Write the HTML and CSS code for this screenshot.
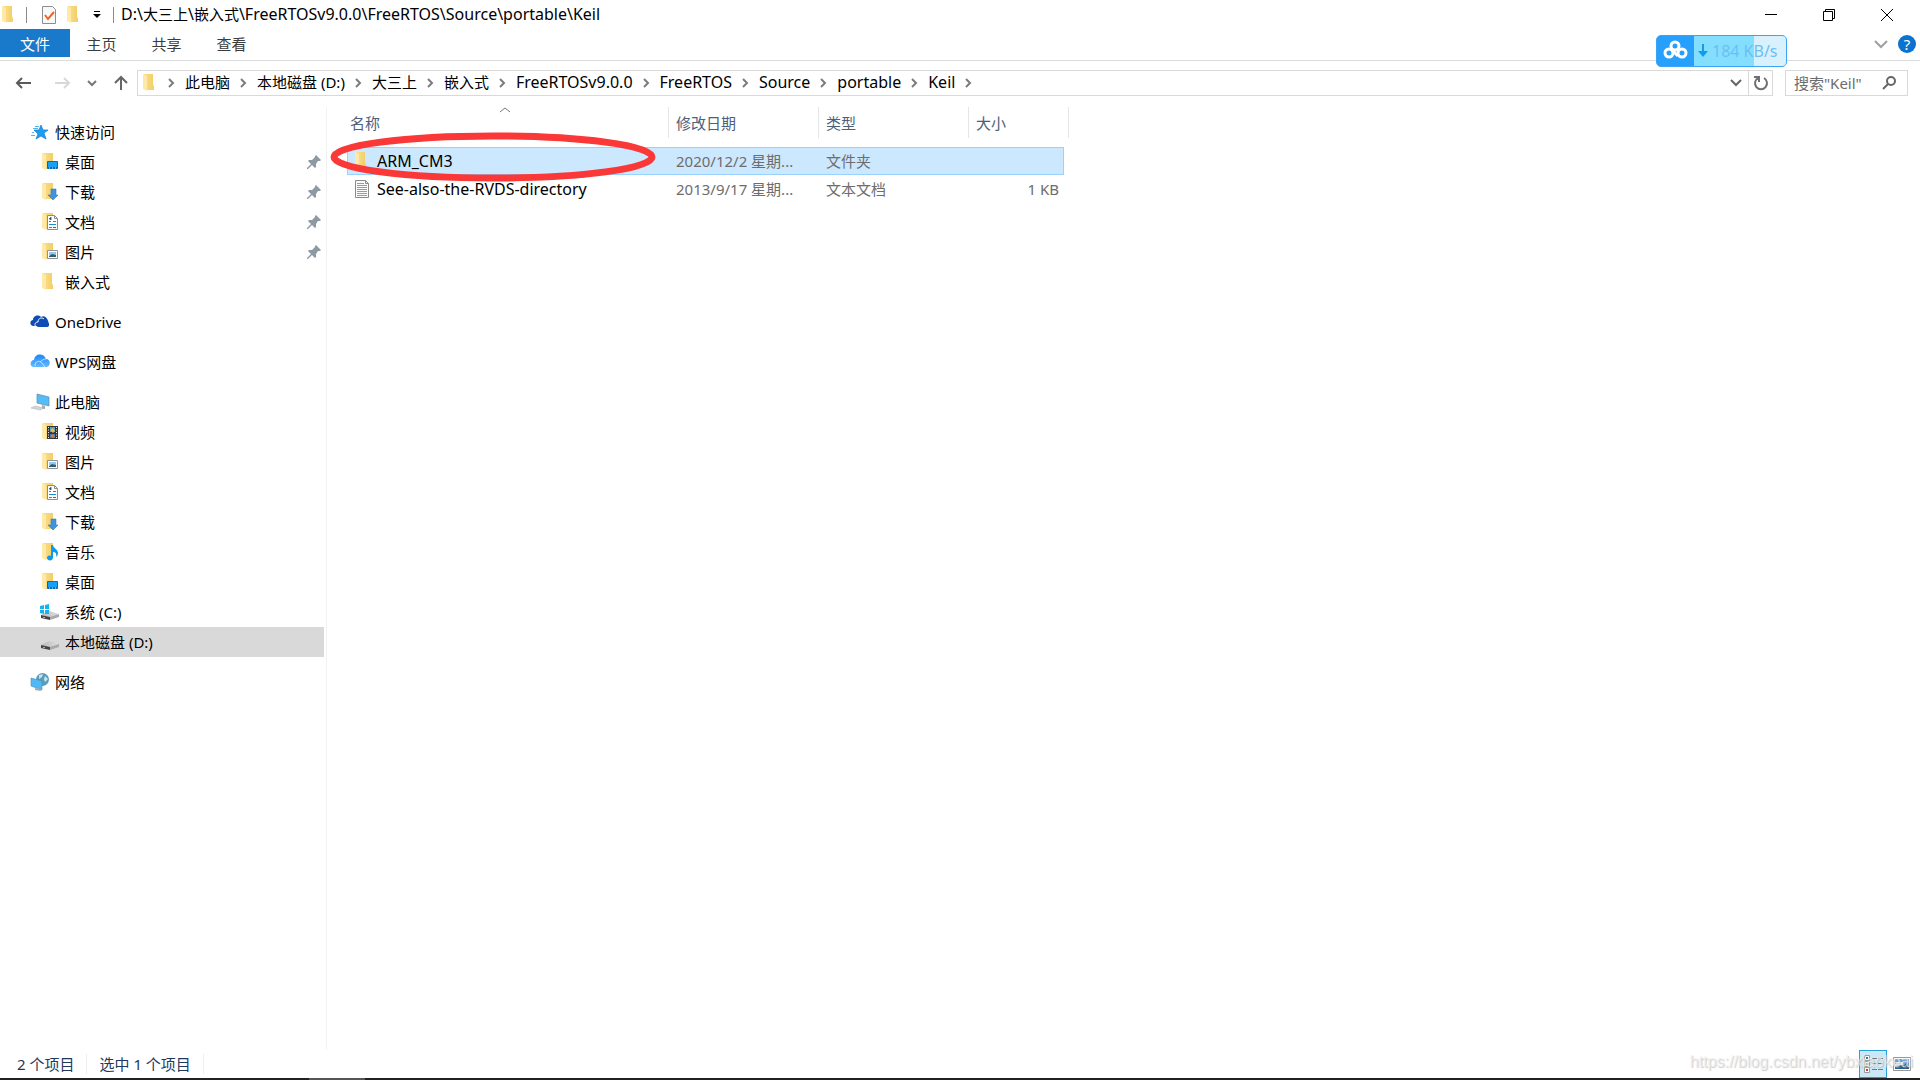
FILE: index.html
```html
<!DOCTYPE html>
<html lang="zh-CN">
<head>
<meta charset="utf-8">
<title>Keil</title>
<link rel="stylesheet" href="styles.css">
</head>
<body>
<svg class="defs" aria-hidden="true">
  <defs>
    <linearGradient id="gold" x1="0" x2="1"><stop offset="0" stop-color="#fbe08d"/><stop offset="1" stop-color="#f3cd66"/></linearGradient>
    <linearGradient id="wps" x1="0" y1="0" x2="0" y2="1"><stop offset="0" stop-color="#1f86f8"/><stop offset="1" stop-color="#62bbff"/></linearGradient>
    <linearGradient id="disk" x1="0" x2="1"><stop offset="0" stop-color="#b9b9b9"/><stop offset="1" stop-color="#dedede"/></linearGradient>
    <symbol id="folder" viewBox="0 0 20 20"><path fill="url(#gold)" d="M3 1h9v10l1 3v3H6z"/><path fill="#ffe9a8" d="M2 1l4 2v15l-4-2z"/></symbol>
    <symbol id="base" viewBox="0 0 20 20"><path fill="url(#gold)" d="M3 1h10v16H6z"/><path fill="#ffe9a8" d="M2 1l4 2v15l-4-2z"/></symbol>
    <symbol id="desktop" viewBox="0 0 20 20"><use href="#base"/><path fill="#16a0f6" stroke="#0b69b5" d="M7.500 9.500h10v7h-10z"/><path stroke="#0b69b5" stroke-width="2" d="M8 16h9"/><path stroke="#bfe6ff" stroke-dasharray="1 2" d="M9 16h7"/></symbol>
    <symbol id="down" viewBox="0 0 20 20"><use href="#base"/><path fill="#3e94de" stroke="#2f7dc6" stroke-width=".6" d="M11 7h5v6h2l-5 5-5-5h3z"/></symbol>
    <symbol id="doc" viewBox="0 0 20 20"><use href="#base"/><path fill="#fff" stroke="#8c8c8c" d="M7.500 3.500h7l3 3v11h-10z"/><path stroke="#8c8c8c" fill="none" d="M14.500 3.500v3h3"/><path stroke="#1b8fd6" d="M9 9.500h2m2 0h3m-7 3h7M9 7l2-2v3m-2 7.500h3"/><path stroke="#277a5c" d="M13 15.500h3"/></symbol>
    <symbol id="pic" viewBox="0 0 20 20"><use href="#base"/><path fill="#fff" stroke="#929292" d="M7.500 8.500h10v8h-10z"/><path fill="#8ec9f4" d="M9 10h7v3H9z"/><path fill="#315f72" d="M9 14l3-2 4 1v2H9z"/></symbol>
    <symbol id="video" viewBox="0 0 20 20"><use href="#base"/><path fill="#343434" d="M7 4h11v13H7z"/><path stroke="#eee" stroke-dasharray="1 1.500" d="M8.500 5v11m8-11v11"/><path fill="#3da1ec" d="M10 5h5v5h-5z"/><path fill="#e9bb3d" d="M10 8l3-2 2 3-2 2z"/><path fill="#2c79d2" d="M10 12h5v4h-5z"/><path fill="#db7b34" d="M10 14l3-2 2 2-2 2z"/></symbol>
    <symbol id="music" viewBox="0 0 20 20"><use href="#base"/><path fill="#0d9bec" d="M11 3h2c0 3 5 4 5 8 0 2-1 3-2 4 1-4-1-5-3-5v5c0 5-6 4-6 1 0-2 2-3 4-2z"/></symbol>
    <symbol id="star" viewBox="0 0 20 20"><path fill="#1b9df0" stroke="#167dcb" stroke-width=".7" d="M11 3l2 5h5l-4 3 2 6-5-3-5 3 2-5-4-4h5z"/><path stroke="#58b4ee" d="M5 4.500h4M3 6.500h5M2 10.500h2M1 13.500h4"/></symbol>
    <symbol id="onedrive" viewBox="0 0 20 20"><path fill="#0f4db4" d="M3 14c-4-1-3-6 0-6 0-4 5-6 8-3 5-3 8 4 8 9H7z"/><path fill="none" stroke="#fff" d="M6 15c-2-2-1-5 2-5 0-4 4-5 6-3"/><path fill="#0f4db4" d="M8 15c-3-1-1-5 1-4 0-4 6-4 7-1 4 0 4 5 1 5z"/></symbol>
    <symbol id="wpscloud" viewBox="0 0 20 20"><path fill="url(#wps)" d="M4 15C-1 15 0 8 4 8c1-7 10-7 12-1 5 0 5 8 0 8z"/><path fill="none" stroke="#d8eeff" stroke-width=".8" d="M5 14c0-5 4-6 7-3l3 4M10 10c2-2 4-3 6-3"/></symbol>
    <symbol id="pc" viewBox="0 0 20 20"><path fill="#53bdf7" stroke="#68899d" stroke-width=".7" d="M7 2l12 3v9L7 11z"/><path fill="#a1a9ad" d="M12 13l3 1v3h-3z"/><path fill="#d3d6d8" stroke="#a8adb0" stroke-width=".5" d="M1 16l4-2 9 2-4 2z"/></symbol>
    <symbol id="drive" viewBox="0 0 20 20"><path fill="url(#disk)" d="M1 13l8-4 10 3-7 4z"/><path fill="#444" d="M1 13l9 2v3l-9-2z"/><path fill="#a9a9a9" d="M10 15l9-3v3l-9 3z"/><path stroke="#58df79" d="M3 15.500h2"/></symbol>
    <symbol id="windrive" viewBox="0 0 20 20"><use href="#drive"/><path fill="#12b5ed" d="M0 4l4-1v4H0zm5-1l4-1v5H5zM0 8h4v4l-4-1zm5 0h4v4H5z"/></symbol>
    <symbol id="network" viewBox="0 0 20 20"><circle cx="12.500" cy="7.500" r="6.500" fill="#5a9db8"/><path fill="#c8e6ed" d="M9 3l4-1-1 3-3 2zm6 1l3 3-3 3-1-3z"/><path fill="#50b8f5" stroke="#4c8eb7" stroke-width=".6" d="M1 6l11 3v9L1 14z"/><path stroke="#a3abb0" stroke-width="2" d="M5 17l6 1"/></symbol>
    <symbol id="pin" viewBox="0 0 14 14"><path fill="#8d9aa3" d="M9 0l5 5-1 1h-2L9 9v3l-1 1-3-3-4 4H0v-1l4-4-3-3 1-1h3l3-3V1z"/></symbol>
    <symbol id="chev" viewBox="0 0 8 12"><path fill="none" stroke="#7c7c7c" stroke-width="2" d="M2 2l4 4-4 4"/></symbol>
  </defs>
</svg>
<div class="window">
  <header class="titlebar">
    <svg class="ico"><use href="#folder"/></svg>
    <span class="bar bar-a"></span>
    <button class="plain check" aria-label="属性"><svg width="16" height="20"><path fill="#f8f8f8" stroke="#8d8d8d" d="M1.500 1.500h10l3 3v14h-13z"/><path fill="none" stroke="#f06423" stroke-width="2" d="M4 10l3 4 6-7"/></svg></button>
    <button class="plain newfolder" aria-label="新建文件夹"><svg class="ico"><use href="#folder"/></svg></button>
    <button class="plain more" aria-label="自定义快速访问工具栏"><svg width="8" height="8"><path d="M1 0h6v1H1zM0 3h8L4 7z"/></svg></button>
    <span class="bar bar-b"></span>
    <h1>D:\<span class="han">大三上</span>\<span class="han">嵌入式</span>\FreeRTOSv9.0.0\FreeRTOS\Source\portable\Keil</h1>
    <div class="controls">
      <button class="plain" aria-label="最小化"><svg width="14" height="14"><path stroke="#000" d="M1 6.500h12"/></svg></button>
      <button class="plain" aria-label="还原"><svg width="14" height="14"><path fill="none" stroke="#000" d="M1.500 3.500h9v9h-9zM3.500 3V1.500h9v9H11"/></svg></button>
      <button class="plain" aria-label="关闭"><svg width="14" height="14"><path stroke="#000" d="M1 1l12 12M13 1L1 13"/></svg></button>
    </div>
  </header>
  <nav class="ribbon">
    <button class="tab file">文件</button><button class="tab">主页</button><button class="tab">共享</button><button class="tab">查看</button>
    <div class="help">
      <button class="plain" aria-label="展开功能区"><svg width="14" height="10"><path fill="none" stroke="#a0a0a0" stroke-width="2" d="M1 2l6 6 6-6"/></svg></button>
      <button class="plain round" aria-label="帮助">?</button>
    </div>
    <div class="speed">
      <svg width="37" height="30"><g fill="none" stroke="#fff" stroke-width="3"><circle cx="18" cy="10" r="4"/><circle cx="12" cy="17" r="4"/><circle cx="25" cy="17" r="4"/><path d="M15 14l6 6"/></g></svg>
      <span class="rate"><svg width="10" height="14"><path fill="#129bea" d="M4 0h2v7h4l-5 6-5-6h4z"/></svg>184 KB/s</span>
    </div>
  </nav>
  <div class="navrow">
    <div class="arrows">
      <button class="plain" aria-label="后退"><svg width="18" height="14"><path fill="none" stroke="#5a5a5a" stroke-width="2" d="M16 7H2m5-5L2 7l5 5"/></svg></button>
      <button class="plain" aria-label="前进"><svg width="18" height="14"><path fill="none" stroke="#d8d8d8" stroke-width="2" d="M1 7h14m-5-5l5 5-5 5"/></svg></button>
      <button class="plain" aria-label="最近浏览的位置"><svg width="10" height="8"><path fill="none" stroke="#777" stroke-width="2" d="M1 2l4 4 4-4"/></svg></button>
      <button class="plain" aria-label="上移"><svg width="14" height="16"><path fill="none" stroke="#666" stroke-width="2" d="M7 15V2M1 8l6-6 6 6"/></svg></button>
    </div>
    <div class="address">
      <svg class="ico"><use href="#folder"/></svg>
      <svg class="chev first"><use href="#chev"/></svg><a href="#" class="han">此电脑</a>
      <svg class="chev"><use href="#chev"/></svg><a href="#" class="han">本地磁盘 (D:)</a>
      <svg class="chev"><use href="#chev"/></svg><a href="#" class="han">大三上</a>
      <svg class="chev"><use href="#chev"/></svg><a href="#" class="han">嵌入式</a>
      <svg class="chev"><use href="#chev"/></svg><a href="#">FreeRTOSv9.0.0</a>
      <svg class="chev"><use href="#chev"/></svg><a href="#">FreeRTOS</a>
      <svg class="chev"><use href="#chev"/></svg><a href="#">Source</a>
      <svg class="chev"><use href="#chev"/></svg><a href="#">portable</a>
      <svg class="chev"><use href="#chev"/></svg><a href="#">Keil</a>
      <svg class="chev"><use href="#chev"/></svg>
      <button class="plain drop" aria-label="以前的位置"><svg width="12" height="8"><path fill="none" stroke="#666" stroke-width="2" d="M1 1l5 5 5-5"/></svg></button>
      <button class="plain refresh" aria-label="刷新"><svg width="16" height="16"><path fill="none" stroke="#707070" stroke-width="2" d="M11 3a6 6 0 1 1-6 0M1 2h5v5"/></svg></button>
    </div>
    <label class="search"><input type="text" placeholder="搜索&quot;Keil&quot;" aria-label="搜索"><svg width="14" height="14"><circle cx="9" cy="5" r="4" fill="none" stroke="#666" stroke-width="2"/><path stroke="#666" stroke-width="2" d="M6 8l-5 5"/></svg></label>
  </div>
  <main class="body">
    <aside class="tree">
      <ul>
        <li><a href="#"><svg class="ico"><use href="#star"/></svg>快速访问</a></li>
        <li class="sub"><a href="#"><svg class="ico"><use href="#desktop"/></svg>桌面<svg class="pin"><use href="#pin"/></svg></a></li>
        <li class="sub"><a href="#"><svg class="ico"><use href="#down"/></svg>下载<svg class="pin"><use href="#pin"/></svg></a></li>
        <li class="sub"><a href="#"><svg class="ico"><use href="#doc"/></svg>文档<svg class="pin"><use href="#pin"/></svg></a></li>
        <li class="sub"><a href="#"><svg class="ico"><use href="#pic"/></svg>图片<svg class="pin"><use href="#pin"/></svg></a></li>
        <li class="sub"><a href="#"><svg class="ico"><use href="#folder"/></svg>嵌入式</a></li>
      </ul>
      <ul><li><a href="#"><svg class="ico"><use href="#onedrive"/></svg>OneDrive</a></li></ul>
      <ul><li><a href="#"><svg class="ico"><use href="#wpscloud"/></svg>WPS网盘</a></li></ul>
      <ul>
        <li><a href="#"><svg class="ico"><use href="#pc"/></svg>此电脑</a></li>
        <li class="sub"><a href="#"><svg class="ico"><use href="#video"/></svg>视频</a></li>
        <li class="sub"><a href="#"><svg class="ico"><use href="#pic"/></svg>图片</a></li>
        <li class="sub"><a href="#"><svg class="ico"><use href="#doc"/></svg>文档</a></li>
        <li class="sub"><a href="#"><svg class="ico"><use href="#down"/></svg>下载</a></li>
        <li class="sub"><a href="#"><svg class="ico"><use href="#music"/></svg>音乐</a></li>
        <li class="sub"><a href="#"><svg class="ico"><use href="#desktop"/></svg>桌面</a></li>
        <li class="sub"><a href="#"><svg class="ico"><use href="#windrive"/></svg>系统 (C:)</a></li>
        <li class="sub current"><a href="#"><svg class="ico"><use href="#drive"/></svg>本地磁盘 (D:)</a></li>
      </ul>
      <ul><li><a href="#"><svg class="ico"><use href="#network"/></svg>网络</a></li></ul>
    </aside>
    <section class="files">
      <table>
        <colgroup><col class="c-name"><col class="c-date"><col class="c-type"><col class="c-size"></colgroup>
        <thead><tr><th>名称<svg class="sort" width="12" height="6"><path fill="none" stroke="#777" d="M1 5l5-4 5 4"/></svg></th><th>修改日期</th><th>类型</th><th>大小</th></tr></thead>
        <tbody>
          <tr class="selected"><td><div class="name"><svg class="ico"><use href="#folder"/></svg>ARM_CM3</div></td><td>2020/12/2 星期...</td><td>文件夹</td><td></td></tr>
          <tr><td><div class="name"><svg class="ico" viewBox="0 0 20 20"><path fill="#fafafa" stroke="#8b8b8b" d="M2.500 1.500h10l3 3v14h-13z"/><path fill="none" stroke="#8b8b8b" d="M12.500 1.500v3h3"/><path stroke="#9b9b9b" d="M4 4.500h7M4 6.500h10M4 8.500h10M4 10.500h10M4 12.500h10M4 14.500h10M4 16.500h10"/></svg>See-also-the-RVDS-directory</div></td><td>2013/9/17 星期...</td><td>文本文档</td><td>1 KB</td></tr>
        </tbody>
      </table>
      <svg class="mark" width="326" height="52"><ellipse cx="163" cy="26" rx="159" ry="21" fill="none" stroke="#fb3838" stroke-width="7"/></svg>
    </section>
  </main>
  <footer class="status">
    <span>2 个项目</span><span>选中 1 个项目</span>
    <div class="views">
      <button class="plain on" aria-label="详细信息"><svg width="20" height="18"><path fill="#fff" stroke="#999" d="M1.500.500h5v5h-5zm0 6h5v5h-5zm0 6h5v5h-5z"/><path stroke="#2a7a9f" stroke-width="2" d="M3 3h2"/><path stroke="#7b9b3c" stroke-width="2" d="M3 9h2"/><path stroke="#c33a2b" stroke-width="2" d="M3 15h2"/><path stroke="#777" stroke-dasharray="5 1" d="M9 3.500h11M9 8.500h11M9 14.500h11"/></svg></button>
      <button class="plain" aria-label="大图标"><svg width="18" height="14"><path fill="#fff" stroke="#999" d="M.500.500h17v13H.500z"/><path fill="#5a9fe6" d="M2 2h14v5H2z"/><path fill="#e8f3fb" d="M3 5h7v3H3z"/><path fill="#2b5c86" d="M2 9l7-1 7-2v6H2z"/></svg></button>
    </div>
    <span class="watermark">https://blog.csdn.net/ybxiaokeai</span>
  </footer>
  <div class="taskbar"></div>
</div>
</body>
</html>
```
FILE: styles.css
```css
* { box-sizing: border-box; }
body { margin: 0; background: #fff; color: #000; font: 15px/20px "Noto Sans", "Noto Sans CJK SC", sans-serif; }
.defs { position: absolute; width: 0; height: 0; }
svg { display: block; flex: none; }
a { color: inherit; text-decoration: none; }
button, input { font: inherit; color: inherit; }
.plain { display: flex; align-items: center; justify-content: center; padding: 0; border: 0; background: none; }
.ico { width: 20px; height: 20px; }
.window { display: flex; flex-direction: column; min-height: 100vh; }

.titlebar { display: flex; align-items: center; height: 29px; }
.bar { width: 1px; height: 16px; background: #8a8a8a; }
.bar-a { margin-left: 6px; }
.check { margin-left: 14px; }
.newfolder { margin-left: 8px; }
.more { margin-left: 8px; }
.bar-b { margin-left: 12px; }
h1 { margin: 0 0 0 7px; padding-bottom: 2px; font-size: 16px; line-height: 20px; font-weight: 400; white-space: nowrap; }
.controls { display: flex; margin-left: auto; padding-right: 4px; }
.controls button { width: 58px; height: 29px; }

.ribbon { position: relative; display: flex; height: 32px; border-bottom: 1px solid #dadbdc; color: #3c3c3c; }
.tab { width: 65px; height: 28px; padding: 2px 2px 0 0; border: 0; background: none; }
.tab.file { width: 70px; padding-right: 0; background: #1979ca; color: #fff; }
.help { display: flex; align-items: center; gap: 10px; height: 30px; margin-left: auto; padding-right: 4px; }
.round { width: 18px; height: 18px; border-radius: 50%; background: #0b72d0; color: #fff; font-size: 15px; line-height: 18px; }
.speed { position: absolute; top: 6px; right: 133px; display: flex; width: 131px; height: 32px; border: 1px solid #3aa5f5; border-radius: 5px; overflow: hidden; background: #26a0fc; }
.rate { display: flex; flex: 1; align-items: center; gap: 4px; padding-left: 4px; background: linear-gradient(90deg, #84dfff 0 60px, #d8f1fd 60px); color: #6abef7; font-size: 16px; white-space: nowrap; }

.navrow { display: flex; padding: 9px 12px 0 0; }
.arrows { display: flex; align-items: center; width: 137px; padding-left: 15px; }
.arrows button:nth-child(2) { margin-left: 21px; }
.arrows button:nth-child(3) { margin-left: 15px; }
.arrows button:nth-child(4) { margin-left: 17px; }
.address { display: flex; flex: 1; align-items: center; height: 26px; padding-left: 3px; border: 1px solid #d9d9d9; font-size: 16px; white-space: nowrap; }
.address a { padding-bottom: 2px; }
.han, .address .han { font-size: 15px; }
.chev { width: 8px; height: 12px; margin: 0 10px 0 9px; }
.chev.first { margin-left: 6px; }
.drop { width: 24px; margin-left: auto; }
.refresh { width: 24px; height: 24px; border-left: 1px solid #d9d9d9; }
.search { display: flex; align-items: center; width: 123px; height: 26px; margin-left: 12px; padding: 0 11px 0 8px; border: 1px solid #d9d9d9; }
.search input { flex: 1; min-width: 0; padding: 0; border: 0; outline: 0; background: none; }
.search input::placeholder { color: #6d6d6d; opacity: 1; }

.body { display: flex; flex: 1; padding-top: 11px; }
.tree { width: 327px; padding: 10px 2px 0 0; border-right: 1px solid #f2f2f2; }
.tree ul { margin: 0 0 10px; padding: 0; list-style: none; }
.tree a { display: flex; align-items: center; gap: 5px; height: 30px; padding: 0 3px 0 30px; }
.tree .sub a { padding-left: 40px; }
.tree .current { background: #d9d9d9; }
.tree .pin { width: 14px; height: 14px; margin-left: auto; }

.files { position: relative; flex: 1; padding-left: 20px; }
table { width: 717px; table-layout: fixed; border-collapse: collapse; }
.c-name { width: 322px; }
.c-date, .c-type { width: 150px; }
.c-size { width: 95px; }
th { position: relative; height: 31px; padding: 0 0 0 7px; color: #4c607a; font-weight: 400; text-align: left; }
th::after { content: ""; position: absolute; top: 0; right: 0; width: 1px; height: 31px; background: #e5e5e5; }
th:last-child::after { right: -5px; }
.sort { position: absolute; top: 0; left: 152px; }
th:first-child { padding-left: 3px; }
td { height: 27px; padding: 0 0 0 7px; color: #6d6d6d; white-space: nowrap; }
td:last-child { padding-right: 5px; text-align: right; }
td:first-child { padding-left: 6px; color: #000; }
.name { display: flex; align-items: center; gap: 4px; font-size: 16px; }
tbody::before { content: ""; display: block; height: 9px; }
.selected { background: #cce8ff; outline: 1px solid #99d1ff; outline-offset: -1px; }
.selected td { height: 28px; }
.mark { position: absolute; top: 24px; left: 3px; }

.status { position: relative; display: flex; align-items: center; height: 28px; padding-left: 17px; color: #1e395b; }
.status > span:not(.watermark) { margin-right: 12px; padding-right: 12px; border-right: 1px solid #eee; }
.views { display: flex; align-items: center; height: 28px; margin-left: auto; padding-right: 4px; }
.views button { width: 28px; height: 28px; }
.views .on { margin-right: 1px; border: 1px solid #26a0da; background: #cbe8f6; }
.watermark { position: absolute; right: 7px; top: 2px; color: rgba(240, 240, 240, .7); font: 16px/20px "Liberation Sans", sans-serif; text-shadow: 1px 1px 1px rgba(170, 170, 170, .6); }
.taskbar { height: 2px; background: linear-gradient(90deg, #222 309px, #555 309px 365px, #222 365px); }
```
